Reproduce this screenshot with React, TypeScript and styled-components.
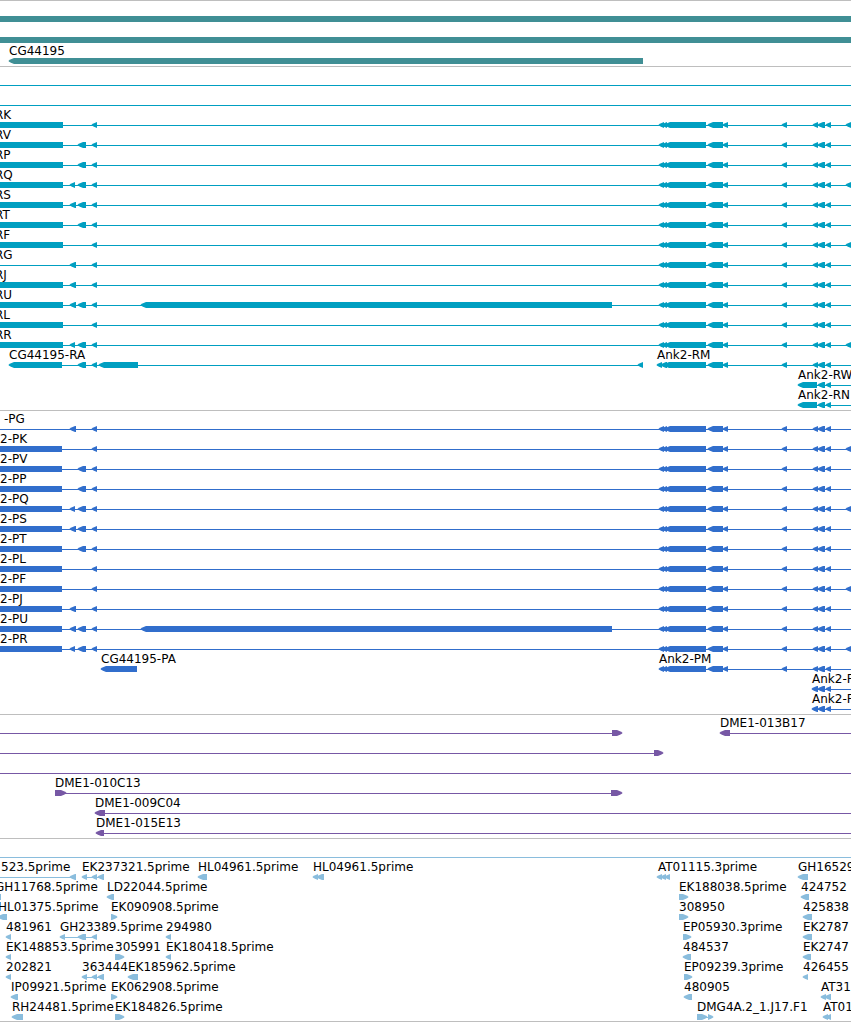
import React from "react";
import styled, { createGlobalStyle } from "styled-components";

const GlobalStyle = createGlobalStyle`
  body {
    margin: 0;
    background: #ffffff;
    color: #000000;
    font-family: "DejaVu Sans", Verdana, sans-serif;
    font-size: 12px;
    line-height: 14px;
  }
`;

const Browser = styled.main`
  width: 100%;
  overflow: hidden;
`;

const TrackPanel = styled.section<{ $gap: number }>`
  display: flex;
  flex-direction: column;
  gap: ${(p) => p.$gap}px;
  padding: 1px 0 2px;
  border-top: 1px solid #bebebe;

  &:last-child {
    padding-bottom: 1px;
    border-bottom: 1px solid #bebebe;
  }
`;

const Lane = styled.div`
  display: flex;
  flex-direction: column;
`;

const LabelStrip = styled.div`
  position: relative;
  height: 14px;
`;

const FeatureLabel = styled.span`
  position: absolute;
  top: 0;
  white-space: nowrap;
`;

const GlyphStrip = styled.svg<{ $color: string }>`
  display: block;
  width: 100%;
  height: 6px;
  fill: ${(p) => p.$color};
`;

type Shape = "left" | "right" | "box";
type Block = [start: number, end: number, shape?: Shape];
type Label = [x: number, text: string];

interface LaneData {
  labels?: Label[];
  lines?: [number, number][];
  blocks?: Block[];
}

interface TrackData {
  name: string;
  color: string;
  gap?: number;
  lanes: LaneData[];
}

/* Features that run on past the visible window end here. */
const FAR = 4000;

/* Arrow heads swell quickly from a blunt tip, so short exons stay readable. */
function blockPath([start, end, shape = "left"]: Block) {
  if (shape === "box") return `M${start} 0H${end}V6H${start}Z`;
  const head = Math.min(5, end - start);
  const dir = shape === "right" ? -1 : 1;
  const tip = shape === "right" ? end : start;
  const tail = shape === "right" ? start : end;
  const neck = tip + dir * head;
  const cheek = tip + dir * 2;
  return (
    `M${tail} 0H${neck}L${cheek} 1.3L${tip - dir * 0.3} 2.4V3.6` +
    `L${cheek} 4.7L${neck} 6H${tail}Z`
  );
}

function FeatureLane({ lane, color }: { lane: LaneData; color: string }) {
  const { labels = [], lines = [], blocks = [] } = lane;
  return (
    <Lane>
      <LabelStrip>
        {labels.map(([x, text]) => (
          <FeatureLabel key={x} style={{ left: x }}>
            {text}
          </FeatureLabel>
        ))}
      </LabelStrip>
      <GlyphStrip $color={color} aria-hidden="true">
        {lines.map(([a, b]) => (
          <rect key={a} x={a} y={3} width={b - a} height={1} />
        ))}
        {blocks.map((b) => (
          <path key={`${b[0]}-${b[1]}`} d={blockPath(b)} />
        ))}
      </GlyphStrip>
    </Lane>
  );
}

const exonA: Block = [92, 97];
const exonB: Block = [78, 86];
const exonC: Block = [70, 76];
const exonCShort: Block = [70, 75];
const longExon: Block = [141, 612];
const edgeExon: Block = [846, 851];

const upstream: Block[] = [
  [708, 723],
  [723, 728],
  [782, 787],
  [813, 818],
  [818, 825],
  [826, 831],
];
const cluster: Block[] = [[659, 664], [662, 667], [665, 706], ...upstream];

function isoform(label: Label, tail: number, extra: Block[] = []): LaneData {
  const body: Block[] = tail > 0 ? [[0, tail, "box"]] : [];
  return {
    labels: [label],
    lines: [[0, FAR]],
    blocks: [...body, exonA, ...extra, ...cluster],
  };
}

const fullLine: LaneData = { lines: [[0, FAR]] };

const readTriple: Block[] = [
  [82, 87],
  [92, 97],
  [98, 104],
];

const tracks: TrackData[] = [
  {
    name: "Genes",
    color: "#408f95",
    gap: 1,
    lanes: [
      { blocks: [[0, FAR, "box"]] },
      { blocks: [[0, FAR, "box"]] },
      { labels: [[9, "CG44195"]], blocks: [[9, 643]] },
    ],
  },
  {
    name: "Transcripts",
    color: "#009fc1",
    lanes: [
      fullLine,
      fullLine,
      isoform([-5, "RK"], 63, [edgeExon]),
      isoform([-5, "RV"], 63, [exonB]),
      isoform([-5, "RP"], 63, [exonB]),
      isoform([-5, "RQ"], 63, [exonCShort, exonB, edgeExon]),
      isoform([-5, "RS"], 63, [exonC, exonB]),
      isoform([-5, "RT"], 63, [exonB]),
      isoform([-5, "RF"], 63, [edgeExon]),
      isoform([-5, "RG"], 0, [exonC]),
      isoform([-5, "RJ"], 63, [exonC]),
      isoform([-5, "RU"], 63, [exonC, exonB, longExon]),
      isoform([-5, "RL"], 63),
      isoform([-5, "RR"], 63, [exonCShort, exonB, edgeExon]),
      {
        labels: [
          [9, "CG44195-RA"],
          [657, "Ank2-RM"],
        ],
        lines: [
          [14, 643],
          [662, FAR],
        ],
        blocks: [
          [9, 62],
          exonB,
          exonA,
          [99, 138],
          [638, 643],
          [657, 662],
          [661, 667],
          [664, 706],
          ...upstream,
        ],
      },
      {
        labels: [[798, "Ank2-RW"]],
        lines: [[803, FAR]],
        blocks: [[798, 817], [818, 825], [826, 831]],
      },
      {
        labels: [[798, "Ank2-RN"]],
        lines: [[803, FAR]],
        blocks: [[798, 817], [818, 825], [826, 831]],
      },
    ],
  },
  {
    name: "Proteins",
    color: "#316ecc",
    lanes: [
      isoform([4, "-PG"], 0, [exonC]),
      isoform([0, "2-PK"], 62, [edgeExon]),
      isoform([0, "2-PV"], 62, [exonB]),
      isoform([0, "2-PP"], 62, [exonB]),
      isoform([0, "2-PQ"], 62, [exonCShort, exonB, edgeExon]),
      isoform([0, "2-PS"], 62, [exonC, exonB]),
      isoform([0, "2-PT"], 62, [exonB]),
      isoform([0, "2-PL"], 62),
      isoform([0, "2-PF"], 62, [edgeExon]),
      isoform([0, "2-PJ"], 62, [exonC]),
      isoform([0, "2-PU"], 62, [exonC, exonB, longExon]),
      isoform([0, "2-PR"], 62, [exonCShort, exonB, edgeExon]),
      {
        labels: [
          [101, "CG44195-PA"],
          [659, "Ank2-PM"],
        ],
        lines: [[664, FAR]],
        blocks: [[101, 137], ...cluster],
      },
      {
        labels: [[812, "Ank2-PW"]],
        lines: [[817, FAR]],
        blocks: [[812, 818], [818, 825], [826, 831]],
      },
      {
        labels: [[812, "Ank2-PN"]],
        lines: [[817, FAR]],
        blocks: [[812, 818], [818, 825], [826, 831]],
      },
    ],
  },
  {
    name: "Clones",
    color: "#7758a5",
    lanes: [
      {
        labels: [[720, "DME1-013B17"]],
        lines: [
          [0, 617],
          [725, FAR],
        ],
        blocks: [
          [612, 622, "right"],
          [720, 730],
        ],
      },
      { lines: [[0, 658]], blocks: [[654, 663, "right"]] },
      fullLine,
      {
        labels: [[55, "DME1-010C13"]],
        lines: [[60, 617]],
        blocks: [
          [55, 66, "right"],
          [611, 622, "right"],
        ],
      },
      { labels: [[95, "DME1-009C04"]], lines: [[100, FAR]], blocks: [[95, 105]] },
      { labels: [[96, "DME1-015E13"]], lines: [[101, FAR]], blocks: [[96, 104]] },
    ],
  },
  {
    name: "Reads",
    color: "#8abddd",
    lanes: [
      fullLine,
      {
        labels: [
          [1, "523.5prime"],
          [82, "EK237321.5prime"],
          [198, "HL04961.5prime"],
          [313, "HL04961.5prime"],
          [658, "AT01115.3prime"],
          [798, "GH16529"],
        ],
        lines: [
          [0, 76],
          [87, 104],
        ],
        blocks: [
          [70, 76],
          ...readTriple,
          [198, 207],
          [313, 318],
          [317, 324],
          [657, 662],
          [661, 666],
          [665, 670],
          [798, 808],
        ],
      },
      {
        labels: [
          [-5, "GH11768.5prime"],
          [107, "LD22044.5prime"],
          [679, "EK188038.5prime"],
          [801, "424752"],
        ],
        blocks: [
          [-5, 1],
          [107, 114],
          [679, 688, "right"],
          [801, 809],
        ],
      },
      {
        labels: [
          [-2, "HL01375.5prime"],
          [111, "EK090908.5prime"],
          [679, "308950"],
          [803, "425838"],
        ],
        blocks: [
          [-2, 7],
          [111, 117, "right"],
          [679, 688, "right"],
          [803, 812],
        ],
      },
      {
        labels: [
          [6, "481961"],
          [60, "GH23389.5prime"],
          [166, "294980"],
          [683, "EP05930.3prime"],
          [803, "EK2787"],
        ],
        lines: [[65, 97]],
        blocks: [
          [6, 11],
          [60, 65],
          [78, 86],
          [92, 97],
          [166, 171],
          [683, 691, "right"],
          [803, 812],
        ],
      },
      {
        labels: [
          [6, "EK148853.5prime"],
          [115, "305991"],
          [166, "EK180418.5prime"],
          [683, "484537"],
          [803, "EK2747"],
        ],
        blocks: [
          [6, 11],
          [115, 124, "right"],
          [166, 171],
          [683, 691],
          [803, 811],
        ],
      },
      {
        labels: [
          [6, "202821"],
          [82, "363444"],
          [128, "EK185962.5prime"],
          [684, "EP09239.3prime"],
          [803, "426455"],
        ],
        lines: [[87, 104]],
        blocks: [
          [6, 11],
          ...readTriple,
          [128, 138],
          [684, 692, "right"],
          [803, 808],
        ],
      },
      {
        labels: [
          [11, "IP09921.5prime"],
          [111, "EK062908.5prime"],
          [684, "480905"],
          [821, "AT31"],
        ],
        blocks: [
          [11, 18],
          [111, 117, "right"],
          [684, 692],
          [821, 826],
          [825, 831],
        ],
      },
      {
        labels: [
          [12, "RH24481.5prime"],
          [115, "EK184826.5prime"],
          [697, "DMG4A.2_1.J17.F1"],
          [823, "AT01"],
        ],
        lines: [[702, 709]],
        blocks: [
          [12, 23],
          [115, 124, "right"],
          [697, 707, "right"],
          [708, 713, "right"],
          [823, 828],
          [826, 831],
        ],
      },
    ],
  },
];

export default function App() {
  return (
    <>
      <GlobalStyle />
      <Browser>
        {tracks.map((track) => (
          <TrackPanel key={track.name} $gap={track.gap ?? 0}>
            {track.lanes.map((lane, i) => (
              <FeatureLane key={i} lane={lane} color={track.color} />
            ))}
          </TrackPanel>
        ))}
      </Browser>
    </>
  );
}
